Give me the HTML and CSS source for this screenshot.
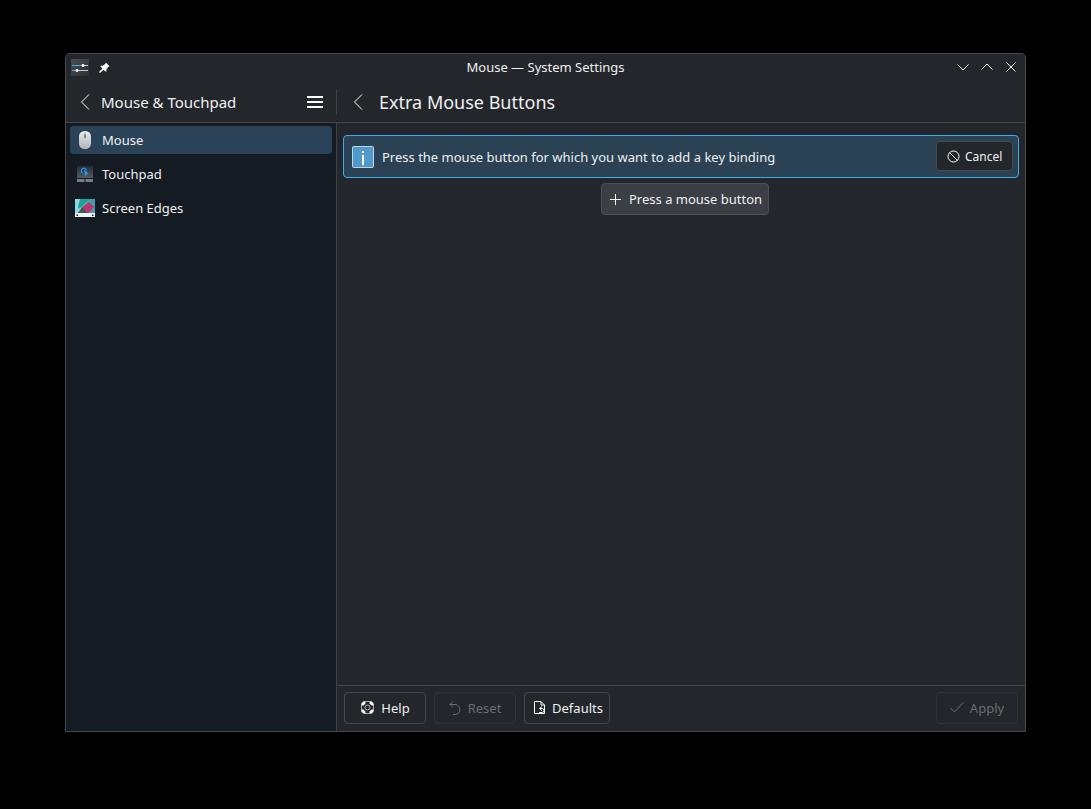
FILE: index.html
```html
<!DOCTYPE html>
<html lang="en">
<head>
<meta charset="utf-8">
<title>Mouse — System Settings</title>
<link rel="stylesheet" href="styles.css">
</head>
<body>
<div class="window">
  <div class="titlebar">
    <div class="tb-left">
      <svg class="app-icon" width="18" height="17" viewBox="0 0 18 17"><defs><linearGradient id="a" x1="0" y1="0" x2="1" y2="1"><stop offset="0" stop-color="#4a4f55"/><stop offset="1" stop-color="#2c2f33"/></linearGradient></defs><rect width="18" height="17" fill="url(#a)"/><path d="M1 6.500h11" stroke="#3daee9" stroke-width="1"/><path d="M12 6.500h5M6 11.500h11" stroke="#c8ccd0" stroke-width="1"/><path d="M1 11.500h5" stroke="#3daee9" stroke-width="1"/><circle cx="12" cy="6.500" r="1.400" fill="#fff"/><circle cx="6" cy="11.500" r="1.400" fill="#fff"/></svg>
      <svg class="pin" width="11" height="11" viewBox="0 0 12 12"><path d="M7.500 .5l4 4-1.300 .6-2.200 3 .2 1.900-1 .6-2.100-2.200L1 12 0 11l3.700-4-2.200-2.100 .6-1 1.900 .2 3-2.200z" fill="#fcfcfc"/></svg>
    </div>
    <div class="tb-title">Mouse — System Settings</div>
    <div class="tb-right">
      <svg width="12" height="12" viewBox="0 0 12 12"><path d="M.5 3.500L6 9l5.500-5.500" class="stroke"/></svg>
      <svg width="12" height="12" viewBox="0 0 12 12"><path d="M.5 8.500L6 3l5.500 5.500" class="stroke"/></svg>
      <svg width="12" height="12" viewBox="0 0 12 12"><path d="M1.500 1.500l9 9M10.500 1.500l-9 9" class="stroke"/></svg>
    </div>
  </div>
  <div class="body">
    <aside class="sidebar">
      <div class="side-head">
        <svg class="chev" width="10" height="16" viewBox="0 0 10 16"><path d="M9 .5L1.500 8 9 15.500" class="stroke"/></svg>
        <span class="side-title">Mouse &amp; Touchpad</span>
        <svg class="burger" width="16" height="12" viewBox="0 0 16 12"><path d="M0 1h16M0 6h16M0 11h16" stroke="#fcfcfc" stroke-width="2"/></svg>
        <span class="head-sep"></span>
      </div>
      <nav class="side-list">
        <div class="item selected">
          <span class="item-icon"><svg width="12" height="18" viewBox="0 0 12 18"><defs><linearGradient id="m" x1="0" y1="0" x2="0" y2="1"><stop offset="0" stop-color="#eceded"/><stop offset="1" stop-color="#b0b3b6"/></linearGradient></defs><rect width="12" height="18" rx="5.500" fill="url(#m)"/><rect x="5" y="2.500" width="2" height="5" rx="1" fill="#85898d"/></svg></span>
          <span>Mouse</span>
        </div>
        <div class="item">
          <span class="item-icon"><svg width="16" height="16" viewBox="0 0 16 16"><defs><linearGradient id="t" x1="0" y1="0" x2="0" y2="1"><stop offset="0" stop-color="#232c38"/><stop offset="1" stop-color="#565b60"/></linearGradient></defs><rect width="16" height="12" fill="url(#t)"/><rect y="13" width="7.500" height="3" fill="#777b7f"/><rect x="8.500" y="13" width="7.500" height="3" fill="#777b7f"/><path d="M5.500 7a2.600 2.600 0 1 1 4 -2.500" fill="none" stroke="#1d99f3" stroke-width="1.200"/><path d="M7 3.500l5 4.500-2.300 .3L8.200 11z" fill="#1d99f3"/></svg></span>
          <span>Touchpad</span>
        </div>
        <div class="item">
          <span class="item-icon"><svg width="20" height="18" viewBox="0 0 20 18"><rect width="20" height="18" fill="#eef2f2"/><rect width="20" height="14" fill="#8fd6e2"/><path d="M5 0h11L4 10l-1-2z" fill="#17a49a"/><path d="M16 0h4v14H6l2-6z" fill="#3f9fb0"/><path d="M7 8l7-5 5 5-5 6H9z" fill="#b8386f"/><path d="M3 14l4-6 6 6z" fill="#4b5557"/><rect x="1.500" y="15.500" width="1.500" height="1.500" fill="#222"/><rect x="17" y="15.500" width="1.500" height="1.500" fill="#222"/></svg></span>
          <span>Screen Edges</span>
        </div>
      </nav>
    </aside>
    <main class="main">
      <div class="main-head">
        <svg class="chev" width="10" height="16" viewBox="0 0 10 16"><path d="M9 .5L1.500 8 9 15.500" class="stroke"/></svg>
        <h1 class="main-title">Extra Mouse Buttons</h1>
      </div>
      <div class="content">
        <div class="banner">
          <span class="info-icon"><svg width="22" height="22" viewBox="0 0 22 22"><rect x=".5" y=".5" width="21" height="21" rx="1" fill="#5299cb" stroke="#bcd6e8"/><path d="M10 5h2v2h-2zM10 9h2v10h-2z" fill="#fcfcfc"/></svg></span>
          <span class="banner-text">Press the mouse button for which you want to add a key binding</span>
          <button class="btn cancel"><svg width="13" height="13" viewBox="0 0 13 13"><circle cx="6.500" cy="6.500" r="5.500" class="stroke"/><path d="M2.600 2.600l7.800 7.800" class="stroke"/></svg>Cancel</button>
        </div>
        <div class="press-row">
          <button class="btn press"><svg width="11" height="11" viewBox="0 0 11 11"><path d="M5.500 0v11M0 5.500h11" class="stroke"/></svg>Press a mouse button</button>
        </div>
      </div>
      <footer class="footer">
        <button class="btn foot help"><svg width="13" height="13" viewBox="0 0 13 13"><rect x=".5" y=".5" width="12" height="12" rx="3.500" fill="none" stroke="#fcfcfc" stroke-opacity=".6"/><circle cx="6.500" cy="6.500" r="2.500" fill="none" stroke="#fcfcfc" stroke-opacity=".6"/><path d="M2.500 .5h2v2l-2 2h-2v-2zM10.500 .5h-2v2l2 2h2v-2zM2.500 12.500h2v-2l-2-2h-2v2zM10.500 12.500h-2v-2l2-2h2v2z" fill="#fcfcfc"/></svg>Help</button>
        <button class="btn foot reset off"><svg width="12" height="14" viewBox="0 0 12 14"><path d="M4 .5L1 3.500 4 6.500M1 3.500h5a5 5 0 0 1 0 10H4" class="stroke"/></svg>Reset</button>
        <button class="btn foot defaults"><svg width="11" height="13" viewBox="0 0 11 13"><path d="M.5 .5h6.500l3.500 3.500v8.500H.5zM7 .5V4h3.500" class="stroke"/><path d="M8 5.500L5.500 7.500 8 9.500M5.500 7.500H8a2 2 0 0 1 0 4H5" class="stroke"/></svg>Defaults</button>
        <span class="spacer"></span>
        <button class="btn foot apply off"><svg width="14" height="11" viewBox="0 0 14 11"><path d="M.5 6l4 4L13.500 .5" class="stroke"/></svg>Apply</button>
      </footer>
    </main>
  </div>
</div>
</body>
</html>
```

FILE: styles.css
```css
* { box-sizing: border-box; }
html, body { margin: 0; height: 100%; }
body {
  background: #000;
  padding: 53px 0 0 65px;
  font-family: "Noto Sans", sans-serif;
  font-size: 13px;
  color: #eff0f1;
}
.stroke { fill: none; stroke: currentColor; stroke-width: 1; }
svg { display: block; flex: none; color: #fcfcfc; }
.window {
  width: 961px;
  height: 679px;
  border: 1px solid #45484c;
  border-radius: 5px 5px 0 0;
  background: #23262b;
  display: flex;
  flex-direction: column;
  overflow: hidden;
}
.titlebar {
  height: 26px;
  flex: none;
  position: relative;
  display: flex;
  align-items: center;
  justify-content: space-between;
  padding: 0 8px 0 5px;
}
.tb-left { display: flex; align-items: center; gap: 10px; }
.tb-title {
  position: absolute;
  left: 0;
  right: 0;
  text-align: center;
  pointer-events: none;
}
.tb-right { display: flex; align-items: center; gap: 12px; }
.body { flex: 1; display: flex; min-height: 0; }
.sidebar {
  width: 271px;
  flex: none;
  display: flex;
  flex-direction: column;
  border-right: 1px solid #3e4145;
}
.side-head {
  height: 43px;
  flex: none;
  display: flex;
  align-items: center;
  background: #23262b;
  border-bottom: 1px solid #45484c;
  padding: 1px 0 0 14px;
  margin-right: -1px;
}
.side-title { font-size: 15px; margin-left: 11px; flex: 1; }
.burger { margin-right: 13px; }
.head-sep { width: 1px; height: 26px; background: #3e4145; }
.side-list {
  flex: 1;
  background: #141b23;
  padding: 3px 4px;
  display: flex;
  flex-direction: column;
  gap: 6px;
}
.item {
  height: 28px;
  display: flex;
  align-items: center;
  border-radius: 4px;
}
.item.selected { background: #2a4358; }
.item-icon { width: 30px; margin-right: 2px; display: flex; justify-content: center; flex: none; }
.main { flex: 1; display: flex; flex-direction: column; min-width: 0; }
.main-head {
  height: 43px;
  flex: none;
  display: flex;
  align-items: center;
  padding: 1px 0 0 16px;
  border-bottom: 1px solid #45484c;
}
.main-title { margin: 0 0 0 16px; font-size: 18px; font-weight: 400; }
.content { flex: 1; padding: 12px 6px 0 6px; }
.banner {
  height: 43px;
  display: flex;
  align-items: center;
  background: #2a4254;
  border: 1px solid #3daee9;
  border-radius: 4px;
  padding: 0 5px 0 8px;
}
.banner-text { flex: 1; margin-left: 8px; }
.btn {
  font: inherit;
  color: #eff0f1;
  display: flex;
  align-items: center;
  white-space: nowrap;
  background: #23262b;
  border: 1px solid #45484c;
  border-radius: 4px;
  padding: 0;
}
.cancel { height: 30px; width: 77px; padding: 0 0 0 10px; gap: 5px; font-size: 12px; margin-top: -1px; }
.press-row { display: flex; justify-content: center; margin-top: 5px; padding-left: 8px; }
.press {
  height: 32px;
  width: 168px;
  padding: 0 6px 0 8px;
  gap: 8px;
  background: #3b3e45;
  border-color: #4c4f55;
}
.footer {
  height: 46px;
  flex: none;
  display: flex;
  align-items: center;
  gap: 8px;
  padding: 0 7px 2px;
  border-top: 1px solid #45484c;
}
.foot { height: 32px; gap: 6px; justify-content: center; }
.help { width: 82px; gap: 7px; padding-left: 1px; }
.reset { width: 82px; gap: 7px; }
.defaults { width: 86px; gap: 7px; padding-left: 3px; }
.apply { width: 82px; }
.spacer { flex: 1; }
.off { color: #6a6d72; border-color: #2f3237; }
.off svg { color: #6a6d72; }
```
